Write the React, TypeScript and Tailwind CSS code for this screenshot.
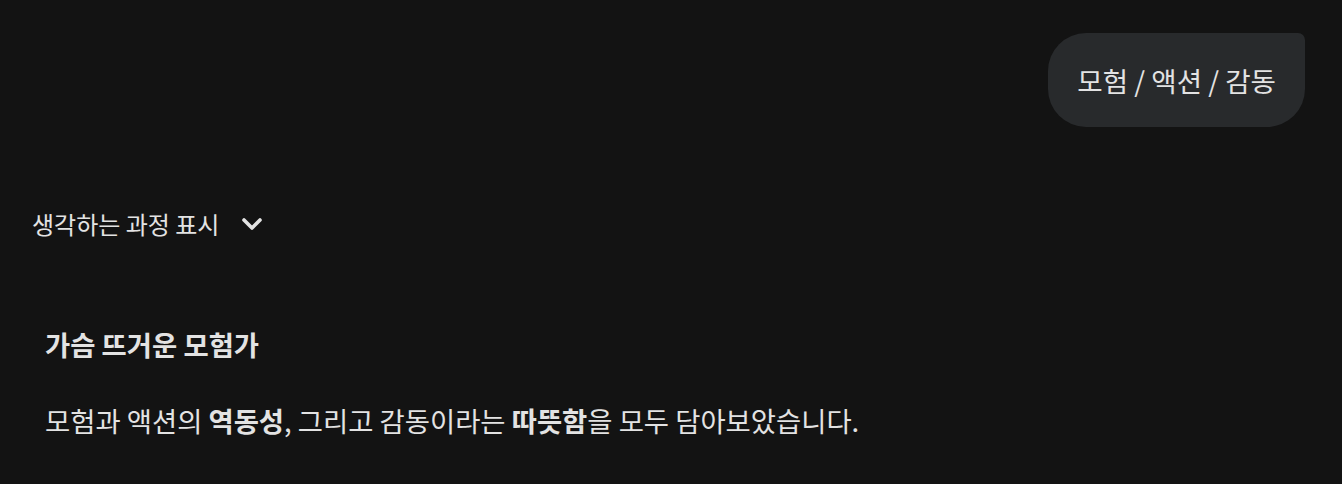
import React from "react";

export default function App() {
  return (
    <div
      className="w-[1342px] h-[484px] bg-[#131313] text-[#e3e3e3] overflow-hidden flex flex-col"
      style={{ fontFamily: '"Noto Sans CJK KR", "Noto Sans", sans-serif' }}
    >
      <div className="flex justify-end pt-[33px] pr-[37px]">
        <div className="h-[94px] flex items-center px-[29px] bg-[#282a2c] rounded-[38px] rounded-tr-[7px] text-[27.6px] leading-[38px]">
          모험 / 액션 / 감동
        </div>
      </div>
      <div className="flex items-center pl-[32px] mt-[81px] h-[32px] gap-[22px]">
        <span className="text-[24px] leading-[32px]">생각하는 과정 표시</span>
        <svg width="22" height="22" viewBox="0 0 22 22" fill="none">
          <polyline points="3,7 11,15 19,7" stroke="#e3e3e3" strokeWidth="3.6" strokeLinecap="round" strokeLinejoin="round" />
        </svg>
      </div>
      <div className="pl-[45px] mt-[86px]">
        <div className="text-[27.4px] leading-[36px] font-bold">가슴 뜨거운 모험가</div>
        <p className="mt-[38px] text-[27.4px] leading-[40px]">
          모험과 액션의 <b className="font-bold">역동성</b>, 그리고 감동이라는 <b className="font-bold">따뜻함</b>을 모두 담아보았습니다.
        </p>
      </div>
    </div>
  );
}
